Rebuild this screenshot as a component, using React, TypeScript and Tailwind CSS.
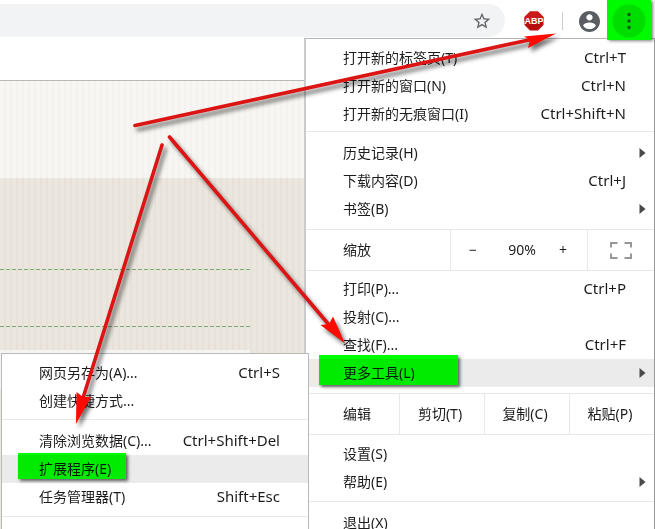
import React from 'react';

interface MenuRowProps {
  label: string;
  shortcut?: string;
  hasSubmenu?: boolean;
  active?: boolean;
  markClass?: string;
}

const MARK = 'pointer-events-none absolute bg-[#00ff00] mix-blend-multiply shadow-[2px_2px_3px_rgba(0,0,0,0.6)]';

const MenuRow: React.FC<MenuRowProps> = ({ label, shortcut, hasSubmenu, active, markClass }) => (
  <button
    type="button"
    role="menuitem"
    className={`relative flex h-7 w-full items-center justify-between pl-[37px] text-left ${hasSubmenu ? 'pr-2' : 'pr-7'} ${active ? 'bg-[#ebebeb]' : 'hover:bg-[#ebebeb]'}`}
  >
    <span>{label}</span>
    {shortcut && <span className="text-[15px]">{shortcut}</span>}
    {hasSubmenu && (
      <svg viewBox="0 0 7 10" className="h-[10px] w-[7px] fill-[#4a4a4a]" aria-hidden="true">
        <path d="M0.5 0L6.5 5L0.5 10Z" />
      </svg>
    )}
    {markClass && <span className={`${MARK} ${markClass}`} />}
  </button>
);

const Separator = () => <div role="separator" className="h-px bg-[#e8e8e8]" />;

const AbpIcon = () => (
  <svg viewBox="0 0 20 20" className="h-5 w-5" role="img" aria-label="ABP">
    <path d="M6 0.5H14L19.5 6V14L14 19.5H6L0.5 14V6Z" fill="#b90d0f" />
    <path d="M6 0.5H14L19.5 6V10H0.5V6Z" fill="#cc1a1a" />
    <text
      x="10"
      y="13"
      textAnchor="middle"
      fontSize="9"
      fontWeight="700"
      fill="#fff"
      fontFamily="'Liberation Sans', sans-serif"
    >
      ABP
    </text>
  </svg>
);

const Toolbar = () => (
  <header className="flex h-[38px] items-center bg-white">
    <div className="mt-[3px] flex h-[33px] flex-1 items-center justify-end rounded-r-full bg-[#f1f3f4] pr-[13px]">
      <button type="button" aria-label="收藏">
        <svg viewBox="0 0 24 24" className="h-5 w-5 fill-[#5f6368]">
          <path d="M22 9.24l-7.19-.62L12 2 9.19 8.63 2 9.24l5.46 4.73L5.82 21 12 17.27 18.18 21l-1.63-7.03L22 9.24zM12 15.4l-3.76 2.27 1-4.28-3.32-2.88 4.38-.38L12 6.1l1.71 4.04 4.38.38-3.32 2.88 1 4.28L12 15.4z" />
        </svg>
      </button>
    </div>
    <div className="mt-1 flex items-center pl-[19px]">
      <button type="button">
        <AbpIcon />
      </button>
      <span className="ml-[18px] h-[18px] w-px bg-[#ccc]" />
      <button type="button" aria-label="用户" className="ml-4">
        <svg viewBox="2 2 20 20" className="h-[21px] w-[21px] fill-[#5a5e63]">
          <path d="M12 2C6.48 2 2 6.48 2 12s4.48 10 10 10 10-4.48 10-10S17.52 2 12 2zm0 3c1.66 0 3 1.34 3 3s-1.34 3-3 3-3-1.34-3-3 1.34-3 3-3zm0 14.2c-2.5 0-4.71-1.28-6-3.22.03-1.99 4-3.08 6-3.08 1.99 0 5.97 1.09 6 3.08-1.29 1.94-3.5 3.22-6 3.22z" />
        </svg>
      </button>
      <div className="w-[55px]" />
    </div>
    {/* the highlighted menu button sits over the popup's top edge */}
    <button
      type="button"
      aria-label="菜单"
      className="absolute top-0 right-1 z-20 flex h-10 w-11 items-center justify-center bg-[#00fa00] shadow-[2px_1px_3px_rgba(0,0,0,0.5)]"
    >
      <svg viewBox="0 0 34 34" className="mt-0.5 h-[34px] w-[34px]">
        <circle cx="17" cy="17" r="16.5" fill="#00de00" />
        <g fill="#0a5c0e">
          <circle cx="17" cy="10.5" r="1.8" />
          <circle cx="17" cy="17" r="1.8" />
          <circle cx="17" cy="23.5" r="1.8" />
        </g>
      </svg>
    </button>
  </header>
);

const DashedLine = () => (
  <div className="h-px w-[250px] bg-[repeating-linear-gradient(90deg,#79aa76_0_4px,transparent_4px_6px)]" />
);

const PageContent = () => (
  <main className="flex flex-1 flex-col">
    <div className="h-[97px] bg-[repeating-linear-gradient(90deg,#f7f6f2_0_4px,#f3f2ee_4px_6px)]" />
    <div className="flex-1 bg-[repeating-linear-gradient(90deg,#ebe6de_0_4px,#e7e1d9_4px_6px)] pt-[91px]">
      <DashedLine />
      <div className="h-14" />
      <DashedLine />
      <div className="mt-[23px] h-10 w-[250px] bg-[#f6f4f0]" />
    </div>
  </main>
);

const MoreToolsMenu = () => (
  <div
    role="menu"
    className="absolute -top-1.5 right-[345px] z-10 w-[308px] border border-b-0 border-[#b8b8b8] bg-white pb-10"
  >
    <div className="pt-[5px] pb-1">
      <MenuRow label="网页另存为(A)..." shortcut="Ctrl+S" />
      <MenuRow label="创建快捷方式..." />
    </div>
    <Separator />
    <div className="pt-[7px] pb-[5px]">
      <MenuRow label="清除浏览数据(C)..." shortcut="Ctrl+Shift+Del" />
      <MenuRow label="扩展程序(E)" active markClass="-top-0.5 left-4 h-[26px] w-[108px]" />
      <MenuRow label="任务管理器(T)" shortcut="Shift+Esc" />
    </div>
    <Separator />
  </div>
);

const EDIT_ACTIONS = ['剪切(T)', '复制(C)', '粘贴(P)'];

const ChromeMenu = () => (
  <div
    role="menu"
    className="absolute top-[38px] right-0 z-10 w-[351px] border border-b-0 border-l-2 border-t-[#b5b5b5] border-r-[#999] border-l-[#cbcbcb] bg-white pb-10"
  >
    <div className="pt-[5px] pb-[3px]">
      <MenuRow label="打开新的标签页(T)" shortcut="Ctrl+T" />
      <MenuRow label="打开新的窗口(N)" shortcut="Ctrl+N" />
      <MenuRow label="打开新的无痕窗口(I)" shortcut="Ctrl+Shift+N" />
    </div>
    <Separator />
    <div className="pt-[7px] pb-1.5">
      <MenuRow label="历史记录(H)" hasSubmenu />
      <MenuRow label="下载内容(D)" shortcut="Ctrl+J" />
      <MenuRow label="书签(B)" hasSubmenu />
    </div>
    <Separator />
    <div className="flex h-10 items-stretch">
      <span className="flex flex-1 items-center pl-[37px]">缩放</span>
      <div className="flex w-[137px] items-center justify-between border-l border-[#e8e8e8] pr-5 pl-[18px]">
        <button type="button" aria-label="缩小">−</button>
        <span className="pl-2">90%</span>
        <button type="button" aria-label="放大">+</button>
      </div>
      <button
        type="button"
        aria-label="全屏"
        className="flex w-[67px] items-center justify-center border-l border-[#e8e8e8]"
      >
        <svg viewBox="0 0 22 17" className="h-[17px] w-[22px]" fill="none" stroke="#979797" strokeWidth="2">
          <path d="M1 5.5V1H7.5M14.5 1H21V5.5M21 11.5V16H14.5M7.5 16H1V11.5" />
        </svg>
      </button>
    </div>
    <Separator />
    <div className="pt-1 pb-1.5">
      <MenuRow label="打印(P)..." shortcut="Ctrl+P" />
      <MenuRow label="投射(C)..." />
      <MenuRow label="查找(F)..." shortcut="Ctrl+F" />
      <div className="relative">
        <MenuRow label="更多工具(L)" hasSubmenu active markClass="-top-1 left-[13px] h-[30px] w-[139px]" />
        <MoreToolsMenu />
      </div>
    </div>
    <Separator />
    <div className="flex h-10 items-stretch">
      <span className="flex flex-1 items-center pl-[37px]">编辑</span>
      {EDIT_ACTIONS.map((action) => (
        <button key={action} type="button" className="w-[85px] border-l border-[#e8e8e8] pr-1">
          {action}
        </button>
      ))}
    </div>
    <Separator />
    <div className="py-[5px]">
      <MenuRow label="设置(S)" />
      <MenuRow label="帮助(E)" hasSubmenu />
    </div>
    <Separator />
    <div className="py-[7px]">
      <MenuRow label="退出(X)" />
    </div>
  </div>
);

const Arrows = () => (
  <svg
    viewBox="0 0 655 529"
    className="pointer-events-none absolute top-0 right-0 z-30 h-[529px] w-[655px] drop-shadow-[3px_4px_2px_rgba(0,0,0,0.55)]"
    aria-hidden="true"
  >
    <g stroke="#dc1414" strokeWidth="3.6" strokeLinecap="round">
      <path d="M135 125.5L531 39.5" />
      <path d="M162 145L83 398" />
      <path d="M169.5 137L330 326" />
    </g>
    <g fill="#ff0a00">
      <path d="M556 33.5L524 36.5L530 40L528 48Z" />
      <path d="M76 424L76.5 392L83 397L91 397Z" />
      <path d="M345 343.5L320.5 325L329 324L333 316.5Z" />
    </g>
  </svg>
);

const App: React.FC = () => {
  return (
    <div className="relative flex min-h-screen flex-col overflow-hidden bg-white font-['Noto_Sans','Noto_Sans_CJK_SC',sans-serif] text-sm text-[#1c1c1c]">
      <Toolbar />
      <div className="h-[43px] border-b border-[#b9b9b9]" />
      <PageContent />
      <ChromeMenu />
      <Arrows />
    </div>
  );
};

export default App;
